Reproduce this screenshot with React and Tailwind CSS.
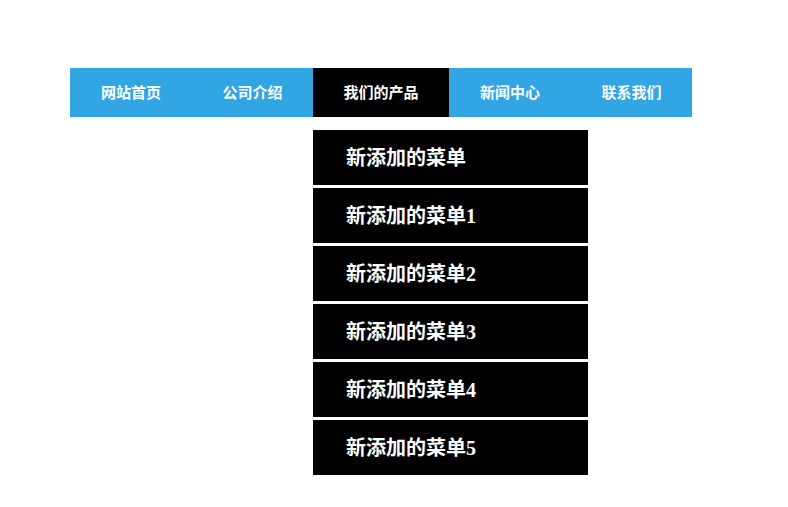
const NAV = [
  { label: '网站首页', w: 'w-[122px]' },
  { label: '公司介绍', w: 'w-[121px]' },
  { label: '我们的产品', w: 'w-[136px]', active: true },
  { label: '新闻中心', w: 'w-[122px]' },
  { label: '联系我们', w: 'w-[121px]' },
];

const SUB = ['新添加的菜单', '新添加的菜单1', '新添加的菜单2', '新添加的菜单3', '新添加的菜单4', '新添加的菜单5'];

export default function App() {
  return (
    <div className="min-h-[507px] w-full bg-white pl-[70px] pt-[68px]">
      <ul className="flex w-[622px] bg-[#32a5e4] font-['Noto_Sans_CJK_SC',sans-serif]">
        {NAV.map((n) => (
          <li
            key={n.label}
            className={`relative flex h-[49px] items-center justify-center text-[15px] font-bold text-white ${n.w} ${n.active ? 'bg-black' : ''}`}
          >
            {n.label}
            {n.active && (
              <ul className="absolute left-0 top-[62px] w-[275px] font-['Liberation_Serif','Noto_Sans_CJK_SC',serif]">
                {SUB.map((s) => (
                  <li
                    key={s}
                    className="mb-[3px] flex h-[55px] items-center bg-black pl-[33px] text-[20px] font-bold text-white"
                  >
                    {s}
                  </li>
                ))}
              </ul>
            )}
          </li>
        ))}
      </ul>
    </div>
  );
}
